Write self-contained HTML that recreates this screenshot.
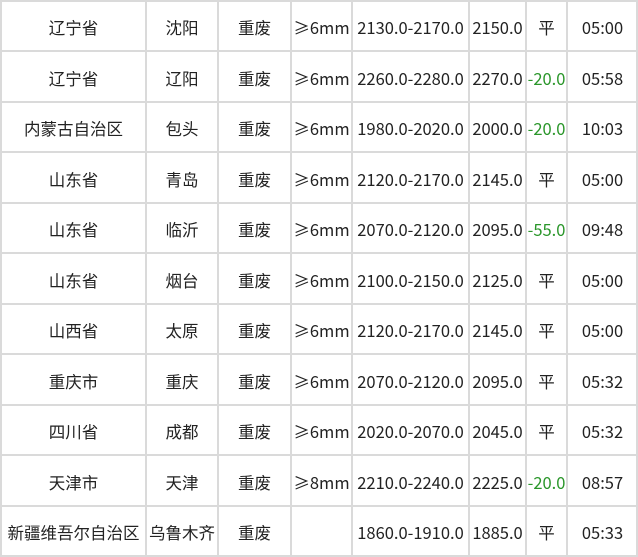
<!DOCTYPE html>
<html><head><meta charset="utf-8"><style>
html,body{margin:0;padding:0;background:#fff;width:638px;height:557px;overflow:hidden;position:relative}
.v{position:absolute;top:0;width:2px;height:557px;background:#dadada}
.h{position:absolute;left:0;height:2px;width:638px;background:#dadada}
.r{position:absolute;left:0;width:638px;height:50px}
.r div{position:absolute;top:0;height:50px;line-height:50px;text-align:center;font-family:"Noto Sans CJK SC","Liberation Sans",sans-serif;font-size:16.5px;color:#222;white-space:nowrap}
.c1{left:1px;width:145px}.c2{left:146px;width:72px}.c3{left:218px;width:73px}.c4{left:291px;width:61px}.c5{left:352px;width:117px}.c6{left:469px;width:57px}.c7{left:526px;width:41px}.c8{left:567px;width:71px}
.g{color:#2a962a!important}
</style></head><body>
<div class="v" style="left:0"></div><div class="v" style="left:145px"></div><div class="v" style="left:217px"></div><div class="v" style="left:290px"></div><div class="v" style="left:351px"></div><div class="v" style="left:468px"></div><div class="v" style="left:525px"></div><div class="v" style="left:566px"></div><div class="v" style="left:636px"></div>
<div class="h" style="top:0"></div><div class="h" style="top:50px"></div><div class="h" style="top:101px"></div><div class="h" style="top:151px"></div><div class="h" style="top:202px"></div><div class="h" style="top:252px"></div><div class="h" style="top:303px"></div><div class="h" style="top:353px"></div><div class="h" style="top:404px"></div><div class="h" style="top:454px"></div><div class="h" style="top:505px"></div><div class="h" style="top:555px"></div>
<div class="r" style="top:2px"><div class="c1">辽宁省</div><div class="c2">沈阳</div><div class="c3">重废</div><div class="c4">≥6mm</div><div class="c5">2130.0-2170.0</div><div class="c6">2150.0</div><div class="c7">平</div><div class="c8">05:00</div></div>
<div class="r" style="top:53px"><div class="c1">辽宁省</div><div class="c2">辽阳</div><div class="c3">重废</div><div class="c4">≥6mm</div><div class="c5">2260.0-2280.0</div><div class="c6">2270.0</div><div class="c7 g">-20.0</div><div class="c8">05:58</div></div>
<div class="r" style="top:103px"><div class="c1">内蒙古自治区</div><div class="c2">包头</div><div class="c3">重废</div><div class="c4">≥6mm</div><div class="c5">1980.0-2020.0</div><div class="c6">2000.0</div><div class="c7 g">-20.0</div><div class="c8">10:03</div></div>
<div class="r" style="top:154px"><div class="c1">山东省</div><div class="c2">青岛</div><div class="c3">重废</div><div class="c4">≥6mm</div><div class="c5">2120.0-2170.0</div><div class="c6">2145.0</div><div class="c7">平</div><div class="c8">05:00</div></div>
<div class="r" style="top:204px"><div class="c1">山东省</div><div class="c2">临沂</div><div class="c3">重废</div><div class="c4">≥6mm</div><div class="c5">2070.0-2120.0</div><div class="c6">2095.0</div><div class="c7 g">-55.0</div><div class="c8">09:48</div></div>
<div class="r" style="top:255px"><div class="c1">山东省</div><div class="c2">烟台</div><div class="c3">重废</div><div class="c4">≥6mm</div><div class="c5">2100.0-2150.0</div><div class="c6">2125.0</div><div class="c7">平</div><div class="c8">05:00</div></div>
<div class="r" style="top:305px"><div class="c1">山西省</div><div class="c2">太原</div><div class="c3">重废</div><div class="c4">≥6mm</div><div class="c5">2120.0-2170.0</div><div class="c6">2145.0</div><div class="c7">平</div><div class="c8">05:00</div></div>
<div class="r" style="top:356px"><div class="c1">重庆市</div><div class="c2">重庆</div><div class="c3">重废</div><div class="c4">≥6mm</div><div class="c5">2070.0-2120.0</div><div class="c6">2095.0</div><div class="c7">平</div><div class="c8">05:32</div></div>
<div class="r" style="top:406px"><div class="c1">四川省</div><div class="c2">成都</div><div class="c3">重废</div><div class="c4">≥6mm</div><div class="c5">2020.0-2070.0</div><div class="c6">2045.0</div><div class="c7">平</div><div class="c8">05:32</div></div>
<div class="r" style="top:457px"><div class="c1">天津市</div><div class="c2">天津</div><div class="c3">重废</div><div class="c4">≥8mm</div><div class="c5">2210.0-2240.0</div><div class="c6">2225.0</div><div class="c7 g">-20.0</div><div class="c8">08:57</div></div>
<div class="r" style="top:507px"><div class="c1">新疆维吾尔自治区</div><div class="c2">乌鲁木齐</div><div class="c3">重废</div><div class="c4"></div><div class="c5">1860.0-1910.0</div><div class="c6">1885.0</div><div class="c7">平</div><div class="c8">05:33</div></div>
</body></html>
